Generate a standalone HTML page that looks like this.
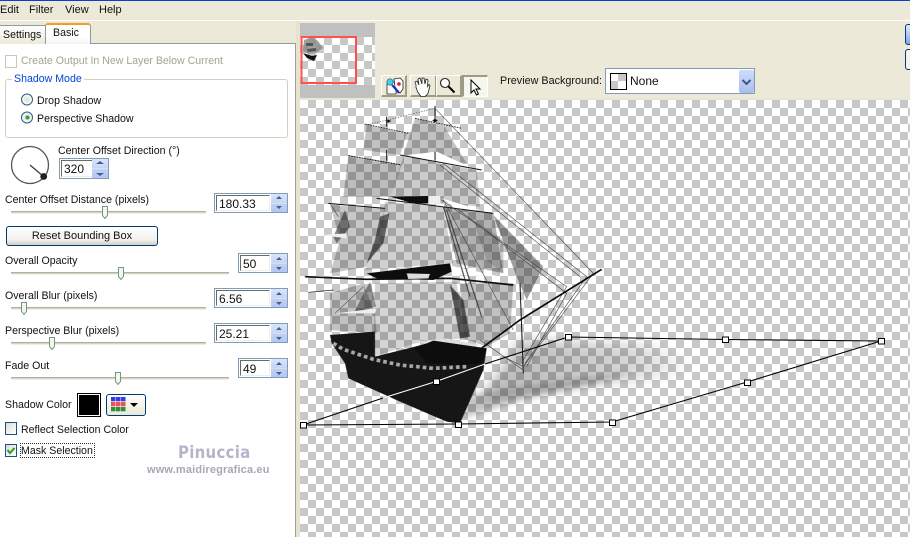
<!DOCTYPE html>
<html><head><meta charset="utf-8"><style>
html,body{margin:0;padding:0;background:#ece9d8}
#p{position:relative;width:910px;height:537px;overflow:hidden;background:#ece9d8;font:10.6px "Liberation Sans",sans-serif;color:#111}
#p div,#p span.t{position:absolute;box-sizing:border-box}
.t{white-space:nowrap;line-height:14px;position:absolute}
.chk{background:repeating-conic-gradient(#c8c8c8 0 25%,#fff 0 50%) 0 0/16px 16px}
.spin{border:1px solid #7f9db9;background:#fff}
.spin .i{left:1px;top:1px;bottom:1px;border-top:1px solid #6b6b5e;border-left:1px solid #6b6b5e;border-right:1px solid #efeee4;border-bottom:1px solid #efeee4;background:#fff;font-size:12px;line-height:17px;padding-left:2px}
.spin .b{right:0;width:16px;top:0;bottom:0;background:linear-gradient(#dbe5fb 0,#c5d4f7 48%,#f2f0d8 50%,#c0cff5 55%,#b4c7f2 100%)}
.track{height:3px;background:#d6d4c6;border-top:1px solid #b0af9f;border-bottom:1px solid #eeeeee}
.box{width:12px;height:13px;border:1px solid #1c5180;background:linear-gradient(135deg,#dcdcd7,#fff)}
.tb{background:#ece9d8;border-left:1px solid #fff;border-top:1px solid #fff;border-right:2px solid #9d9a86;border-bottom:2px solid #9d9a86}
</style></head><body><div id="p">
<div style="left:0;top:0;width:910px;height:1px;background:#0a3fd0"></div>
<div style="left:0;top:20px;width:910px;height:1px;background:#fff"></div>
<span class="t" style="left:0;top:3px;font-size:11px">Edit</span>
<span class="t" style="left:29px;top:3px;font-size:11px">Filter</span>
<span class="t" style="left:65px;top:3px;font-size:11px">View</span>
<span class="t" style="left:99px;top:3px;font-size:11px">Help</span>

<!-- panel -->
<div style="left:0;top:43px;width:296px;height:494px;background:#fff;border-top:1px solid #919b9c;border-right:1px solid #a0a09a"></div>
<div style="left:296px;top:21px;width:4px;height:516px;background:#e6e3d0"></div>
<div style="left:0;top:25px;width:46px;height:19px;background:linear-gradient(#fff,#ece9d8);border:1px solid #919b9c;border-left:0;border-bottom:0"></div>
<span class="t" style="left:3px;top:28px">Settings</span>
<div style="left:45px;top:23px;width:46px;height:21px;background:linear-gradient(#fff 60%,#f4f4f8);border-right:1px solid #919b9c;border-left:1px solid #919b9c;border-top:2px solid #f0a020;border-radius:3px 3px 0 0"></div>
<span class="t" style="left:53px;top:26px">Basic</span>

<div class="box" style="left:5px;top:55px;border-color:#c9c7ba;background:#fff"></div>
<span class="t" style="left:21px;top:54px;color:#a5a294">Create Output In New Layer Below Current</span>

<div style="left:5px;top:79px;width:283px;height:59px;border:1px solid #d0d0bf;border-radius:3px"></div>
<span class="t" style="left:12px;top:72px;background:#fff;padding:0 2px;color:#0046d5">Shadow Mode</span>
<svg style="position:absolute;left:0;top:0" width="300" height="537">
<defs><radialGradient id="rg"><stop offset="0" stop-color="#dcdcd5"/><stop offset="1" stop-color="#fff"/></radialGradient></defs>
<circle cx="27" cy="99.500" r="5.500" fill="url(#rg)" stroke="#2d5a80"/>
<circle cx="27" cy="117.500" r="5.500" fill="url(#rg)" stroke="#2d5a80"/>
<circle cx="27.500" cy="117.500" r="2" fill="#30a040"/>
<circle cx="30" cy="165" r="18.500" fill="#fff" stroke="#555" stroke-width="1.300"/>
<path d="M30 165L43 176" stroke="#444" stroke-width="1.400"/>
<circle cx="43.700" cy="176.500" r="3.400" fill="#222"/>
</svg>
<span class="t" style="left:37px;top:94px">Drop Shadow</span>
<span class="t" style="left:37px;top:112px">Perspective Shadow</span>
<span class="t" style="left:58px;top:144px">Center Offset Direction (°)</span>

<div class="spin" style="left:59px;top:158px;width:50px;height:21px"><div class="i" style="width:32px">320</div><div class="b"></div></div>
<span class="t" style="left:5px;top:193px">Center Offset Distance (pixels)</span>
<div class="track" style="left:11px;top:211px;width:195px;z-index:0"></div>
<div class="spin" style="left:214px;top:193px;width:74px;height:20px"><div class="i" style="width:54px">180.33</div><div class="b"></div></div>

<div style="left:6px;top:226px;width:152px;height:20px;border:1px solid #003c74;border-radius:3px;background:linear-gradient(#fff,#f2f1ea 70%,#d6d0c5);text-align:center;line-height:18px;font-size:11px">Reset Bounding Box</div>

<span class="t" style="left:5px;top:254px">Overall Opacity</span>
<div class="track" style="left:11px;top:272px;width:218px"></div>
<div class="spin" style="left:238px;top:253px;width:50px;height:20px"><div class="i" style="width:30px">50</div><div class="b"></div></div>

<span class="t" style="left:5px;top:289px">Overall Blur (pixels)</span>
<div class="track" style="left:11px;top:307px;width:195px"></div>
<div class="spin" style="left:214px;top:288px;width:74px;height:20px"><div class="i" style="width:54px">6.56</div><div class="b"></div></div>

<span class="t" style="left:5px;top:324px">Perspective Blur (pixels)</span>
<div class="track" style="left:11px;top:342px;width:195px"></div>
<div class="spin" style="left:214px;top:323px;width:74px;height:20px"><div class="i" style="width:54px">25.21</div><div class="b"></div></div>

<span class="t" style="left:5px;top:359px">Fade Out</span>
<div class="track" style="left:11px;top:377px;width:218px"></div>
<div class="spin" style="left:238px;top:358px;width:50px;height:20px"><div class="i" style="width:30px">49</div><div class="b"></div></div>

<svg style="position:absolute;left:0;top:0;z-index:2" width="300" height="400">
<g fill="#f6f6f0" stroke="#6f9a78">
<path d="M102.500 206.500h5v9l-2.500 3-2.500-3z"/>
<path d="M118.500 267.500h5v9l-2.500 3-2.500-3z"/>
<path d="M21.500 302.500h5v9l-2.500 3-2.500-3z"/>
<path d="M49.500 337.500h5v9l-2.500 3-2.500-3z"/>
<path d="M115.500 372.500h5v9l-2.500 3-2.500-3z"/>
</g>
<g fill="#3f5f90">
<path d="M96 164l4-3 4 3zM96 173l4 3 4-3z"/>
<path d="M276 199l3-3 3 3zM276 206l3 3 3-3z"/>
<path d="M276 260l3-3 3 3zM276 267l3 3 3-3zM276 295l3-3 3 3zM276 302l3 3 3-3zM276 330l3-3 3 3zM276 337l3 3 3-3zM276 365l3-3 3 3zM276 372l3 3 3-3z"/>
</g>
</svg>

<span class="t" style="left:5px;top:398px">Shadow Color</span>
<div style="left:77px;top:393px;width:24px;height:24px;border:1px solid #000;background:#000;box-shadow:inset 0 0 0 1px #fff"></div>
<div style="left:106px;top:394px;width:40px;height:22px;border:1px solid #003c74;border-radius:3px;background:linear-gradient(#fff,#ece9d8)"></div>
<svg style="position:absolute;left:110px;top:397px" width="32" height="16">
<rect x="1" y="0" width="4.500" height="4.300" fill="#3838f0"/><rect x="6" y="0" width="4.500" height="4.300" fill="#3838f0"/><rect x="11" y="0" width="4.500" height="4.300" fill="#3838f0"/>
<rect x="1" y="5" width="4.500" height="4.300" fill="#f05050"/><rect x="6" y="5" width="4.500" height="4.300" fill="#f05050"/><rect x="11" y="5" width="4.500" height="4.300" fill="#f05050"/>
<rect x="1" y="10" width="4.500" height="4.300" fill="#2e9040"/><rect x="6" y="10" width="4.500" height="4.300" fill="#2e9040"/><rect x="11" y="10" width="4.500" height="4.300" fill="#2e9040"/>
<path d="M20 6h8l-4 4z" fill="#000"/>
</svg>

<div class="box" style="left:5px;top:422px"></div>
<span class="t" style="left:21px;top:423px">Reflect Selection Color</span>
<div class="box" style="left:5px;top:444px"></div>
<svg style="position:absolute;left:5px;top:444px" width="12" height="13"><path d="M2.500 6l2.500 3 4.500-5" fill="none" stroke="#21a121" stroke-width="2"/></svg>
<div style="left:20px;top:443px;width:75px;height:15px;border:1px dotted #333"></div>
<span class="t" style="left:21px;top:444px">Mask Selection</span>

<span class="t" style="left:178px;top:443px;font-size:17px;line-height:20px;font-weight:bold;color:#b4b4cc;letter-spacing:.3px;font-family:'DejaVu Sans',sans-serif;transform-origin:left;transform:scaleX(.88)">Pinuccia</span>
<span class="t" style="left:147px;top:463px;font-size:11px;font-weight:bold;color:#a8a8b4;letter-spacing:.15px">www.maidiregrafica.eu</span>

<!-- thumbnail -->
<div style="left:300px;top:23px;width:75px;height:75px;background:#c0c0c0"></div>
<div class="chk" style="left:300px;top:37px;width:75px;height:48px"></div>
<svg style="position:absolute;left:300px;top:23px" width="75" height="75">
<path d="M4 17l8-3 6 4 5 7-7 5-8 1-5-3z" fill="#888" opacity=".8"/>
<path d="M6 20h7v3H6zM7 26l9-1v3l-8 1z" fill="#555"/>
<path d="M3 30l9 3 5-1-3 6-7-3z" fill="#111"/>
<rect x="1.500" y="14" width="54.500" height="46" fill="none" stroke="#ff5050" stroke-width="2"/>
</svg>

<!-- toolbar -->
<div class="tb" style="left:381px;top:75px;width:26px;height:22px"></div>
<div class="tb" style="left:410px;top:75px;width:27px;height:22px"></div>
<div class="tb" style="left:436px;top:75px;width:26px;height:22px"></div>
<div style="left:462px;top:75px;width:26px;height:22px;border-top:2px solid #9d9a86;border-left:2px solid #9d9a86;border-right:1px solid #fff;border-bottom:1px solid #fff;background:#f6f5ee"></div>
<svg style="position:absolute;left:380px;top:74px" width="110" height="24">
<path d="M7 10l6-2 3 1v11H7z" fill="#fff" stroke="#222" stroke-width=".8"/>
<path d="M14 5l6-1 3 3v8l-3 4-5-6z" fill="#fff" stroke="#222" stroke-width=".8"/>
<circle cx="19" cy="10" r="1.800" fill="#e8104a"/>
<circle cx="10" cy="8" r="3.200" fill="#45d0e6" stroke="#268" stroke-width=".7"/>
<path d="M12 11l7 8" stroke="#2030c0" stroke-width="2"/>
<path d="M36 11l-1-3 2-1 2 4-1-6 2-1 2 6v-6h2l1 6 1-5 2 1-.5 6.500 1.500-2 1 1-2 8-3 3h-4l-3-4-2-5z" fill="#fff" stroke="#222" stroke-width=".8"/>
<circle cx="65" cy="9" r="4.500" fill="#fff" stroke="#222" stroke-width="1.100"/>
<path d="M68.500 12.500l6 6" stroke="#000" stroke-width="2"/>
<path d="M91 6v13l3-3 2.500 5 2-1-2.500-5h4z" fill="#fff" stroke="#000" stroke-width="1"/>
</svg>

<span class="t" style="left:500px;top:74px;font-size:10.8px">Preview Background:</span>
<div style="left:605px;top:68px;width:150px;height:26px;background:#fff;border:1px solid #7f9db9"></div>
<div style="left:610px;top:73px;width:17px;height:17px;border:1px solid #000;background:#fff"></div>
<div style="left:611px;top:81px;width:7px;height:8px;background:#c8c8c8"></div>
<div style="left:618px;top:74px;width:8px;height:7px;background:#c8c8c8"></div>
<span class="t" style="left:630px;top:74px;font-size:12px">None</span>
<div style="left:739px;top:70px;width:15px;height:23px;background:linear-gradient(#cfdcf9,#a9bdf0);border-radius:2px"></div>
<svg style="position:absolute;left:739px;top:70px" width="15" height="23"><path d="M3.500 10l4 4 4-4" fill="none" stroke="#3b5a8a" stroke-width="2"/></svg>

<div style="left:905px;top:24px;width:8px;height:21px;border:1px solid #003c74;border-radius:3px;background:linear-gradient(#e3ecfb,#7fa6e8)"></div>
<div style="left:905px;top:49px;width:8px;height:21px;border:1px solid #003c74;border-radius:3px;background:#f4f3ec"></div>

<!-- preview -->
<div class="chk" style="left:300px;top:100px;width:610px;height:437px"></div>
<div style="left:300px;top:99px;width:610px;height:1px;background:#e6e4d8"></div>
<svg style="position:absolute;left:300px;top:100px" width="610" height="437" viewBox="0 0 610 437">
<defs>
<filter id="b1" x="-20%" y="-30%" width="140%" height="160%"><feGaussianBlur stdDeviation="6"/></filter>
<filter id="b2" x="-20%" y="-20%" width="140%" height="140%"><feGaussianBlur stdDeviation=".6"/></filter>
<filter id="b3" x="-30%" y="-60%" width="160%" height="220%"><feGaussianBlur stdDeviation="3"/></filter>
<linearGradient id="sh" x1="0" x2="1" y1="0" y2="0"><stop offset="0" stop-color="#000" stop-opacity=".28"/><stop offset=".7" stop-color="#000" stop-opacity=".16"/><stop offset="1" stop-color="#000" stop-opacity="0"/></linearGradient>
</defs>
<!-- cast shadow -->
<path d="M220 240L345 245 395 260 380 275 250 290 180 300z" fill="url(#sh)" filter="url(#b1)"/>
<path d="M165 296L250 282 330 272 300 282 220 300 165 318z" fill="#000" opacity=".22" filter="url(#b3)"/>
<g transform="scale(.33333)">
<g filter="url(#b2)">
<!-- sails -->
<g fill="#111">
<path d="M200 75L320 100 300 165 190 150z" opacity=".24"/>
<path d="M345 55L430 75 500 190 310 165z" opacity=".24"/>
<path d="M145 170L305 195 270 290 130 290z" opacity=".26"/>
<path d="M310 170L415 180 530 210 540 320 270 290z" opacity=".2"/>
<path d="M90 315L255 325 240 430 200 500 90 520 120 420z" opacity=".22"/>
<path d="M255 305L430 320 460 490 195 510 240 430z" opacity=".18"/>
<path d="M430 320L580 340 610 520 470 490z" opacity=".3"/>
<path d="M580 345L730 500 680 600 650 530z" opacity=".38"/>
<path d="M90 580L190 550 225 640 230 700 90 690z" opacity=".24"/>
<path d="M225 550L470 545 490 715 345 730 220 770z" opacity=".17"/>
<path d="M480 550L640 550 630 700 560 740 490 715z" opacity=".24"/>
<path d="M100 410L135 330 150 380 110 430z" opacity=".5"/>
<path d="M240 350L268 340 250 430 200 490 225 420z" opacity=".6"/>
<path d="M450 555L490 600 510 710 480 715z" opacity=".65"/>
<path d="M160 640L210 545 228 620z" opacity=".45"/>
<path d="M520 360L610 420 610 520 560 480z" opacity=".2"/>
</g>
<path d="M60 405L140 400 140 415z" fill="#eee"/>
<path d="M420 490L600 530 470 525z" fill="#fff"/>
<path d="M320 165L410 155 530 210 420 190z" fill="#fff"/>
<path d="M425 295L540 330 480 330z" fill="#fff"/>
<path d="M105 640L230 625 225 640z" fill="#eee"/>
<path d="M345 725L440 715 540 735 470 750z" fill="#ddd"/>
<!-- hull -->
<path d="M90 705L225 695 225 770 345 740 400 725 560 745 550 810 480 970 440 965 300 905 145 835 135 790 95 730z" fill="#161616"/>
<path d="M345 745L400 722 560 745 545 790 480 795 380 790z" fill="#0a0a0a"/>
<path d="M100 730L130 748 220 778 300 795 400 805 500 800" fill="none" stroke="#a8a8a8" stroke-width="11" stroke-dasharray="11 9"/>
<!-- yards -->
<path d="M15 530L200 538 450 535 640 555" fill="none" stroke="#0c0c0c" stroke-width="5"/>
<path d="M200 520L450 490 455 515 400 540 230 535z" fill="#111"/>
<path d="M320 520L390 522 385 535 325 537z" fill="#ddd"/>
<path d="M270 290L385 288 385 310 340 310z" fill="#111"/>
<path d="M385 288L420 288 422 312 385 310z" fill="#eee"/>
<path d="M230 295L580 340" fill="none" stroke="#111" stroke-width="3"/>
<path d="M85 310L255 325" fill="none" stroke="#111" stroke-width="3"/>
<path d="M25 577L100 570" fill="none" stroke="#222" stroke-width="2"/>
<path d="M145 167L305 195" fill="none" stroke="#111" stroke-width="3" stroke-dasharray="6 2"/>
<path d="M300 165L545 210" fill="none" stroke="#111" stroke-width="3"/>
<path d="M195 72L325 100M345 55L485 85" fill="none" stroke="#111" stroke-width="2.500" stroke-dasharray="5 3"/>
<path d="M260 50V80M405 18V65M260 150V182M405 155V182" stroke="#111" stroke-width="3"/>
<path d="M262 58l12 5-12 6z" fill="#111"/>
<path d="M397 62l8-6 8 6-8 5z" fill="#111"/>
<path d="M440 330L545 650M430 320L510 590" fill="none" stroke="#333" stroke-width="3"/>
</g>
<!-- rigging -->
<g fill="none" stroke="#444" stroke-width="1.800">
<path d="M405 25L880 520 670 800 610 770"/>
<path d="M430 190L860 530 675 790"/>
<path d="M420 195L840 530"/>
<path d="M425 300L800 560 670 780"/>
<path d="M470 325L800 580 680 800"/>
<path d="M200 75L405 25" stroke-dasharray="4 4"/>
<path d="M105 640L190 560M90 310L115 350"/>
<path d="M540 720L670 810"/>
<path d="M430 300L640 690"/>
</g>
<path d="M660 550L670 820" stroke="#111" stroke-width="3" fill="none"/>
<path d="M540 748L660 660 905 508" stroke="#0a0a0a" stroke-width="5" fill="none"/>
</g>
<!-- bounding box -->
<path d="M3 325L83 298M185 264L268 237L425 239.500L581 241L447 282L312 322L158 324L3 325" fill="none" stroke="#000" stroke-width="1.100"/>
<path d="M83 298L136 281.500L185 264" fill="none" stroke="#fff" stroke-width="1.100"/>
<g fill="#fff" stroke="#000">
<rect x=".5" y="322.500" width="6" height="5.500"/><rect x="133.500" y="279" width="6" height="5.500"/><rect x="265.500" y="234.500" width="6" height="5.500"/><rect x="422.500" y="237" width="6" height="5.500"/><rect x="578.500" y="238.500" width="6" height="5.500"/><rect x="444.500" y="280" width="6" height="5.500"/><rect x="309.500" y="320" width="6" height="5.500"/><rect x="155.500" y="322" width="6" height="5.500"/>
</g>
</svg>
</div></body></html>
